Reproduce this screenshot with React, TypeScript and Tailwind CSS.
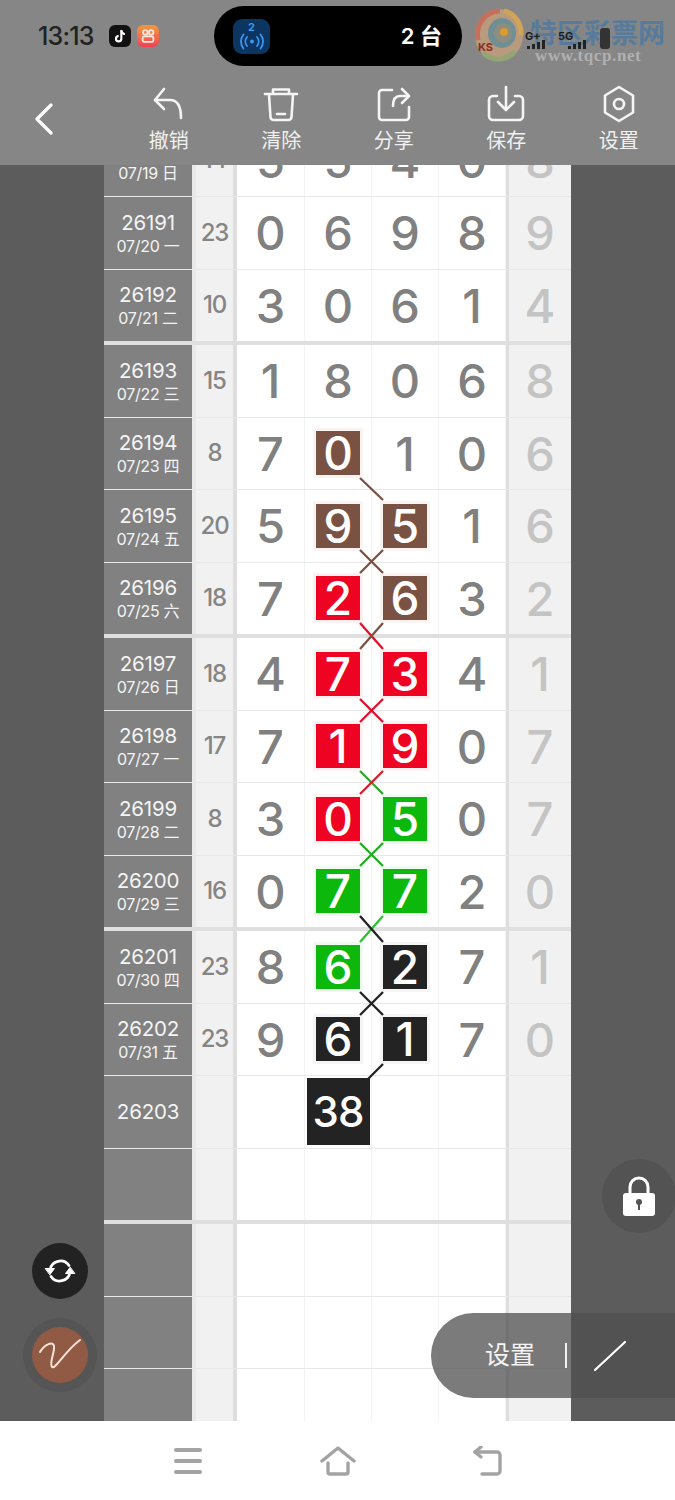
import React from "react";

type Tone = "brown" | "red" | "green" | "black";

type RowData = {
  no?: string;
  date?: string;
  sum?: string;
  nums?: string[];
  last?: string;
  marks?: (Tone | null)[];
  thick?: boolean;
  total?: string;
};

const TONES: Record<Tone, string> = {
  brown: "bg-[#7a5244] ring-[#f9f4f2]",
  red: "bg-[#ee0422] ring-[#fdf0f2]",
  green: "bg-[#0cb80c] ring-[#f1faf1]",
  black: "bg-[#232323] ring-[#f5f5f5]",
};

const ROWS: RowData[] = [
  { no: "26190", date: "07/19 日", sum: "14", nums: ["5", "5", "4", "0"], last: "8" },
  { no: "26191", date: "07/20 一", sum: "23", nums: ["0", "6", "9", "8"], last: "9" },
  { no: "26192", date: "07/21 二", sum: "10", nums: ["3", "0", "6", "1"], last: "4", thick: true },
  { no: "26193", date: "07/22 三", sum: "15", nums: ["1", "8", "0", "6"], last: "8" },
  { no: "26194", date: "07/23 四", sum: "8", nums: ["7", "0", "1", "0"], last: "6", marks: [null, "brown", null, null] },
  { no: "26195", date: "07/24 五", sum: "20", nums: ["5", "9", "5", "1"], last: "6", marks: [null, "brown", "brown", null] },
  { no: "26196", date: "07/25 六", sum: "18", nums: ["7", "2", "6", "3"], last: "2", marks: [null, "red", "brown", null], thick: true },
  { no: "26197", date: "07/26 日", sum: "18", nums: ["4", "7", "3", "4"], last: "1", marks: [null, "red", "red", null] },
  { no: "26198", date: "07/27 一", sum: "17", nums: ["7", "1", "9", "0"], last: "7", marks: [null, "red", "red", null] },
  { no: "26199", date: "07/28 二", sum: "8", nums: ["3", "0", "5", "0"], last: "7", marks: [null, "red", "green", null] },
  { no: "26200", date: "07/29 三", sum: "16", nums: ["0", "7", "7", "2"], last: "0", marks: [null, "green", "green", null], thick: true },
  { no: "26201", date: "07/30 四", sum: "23", nums: ["8", "6", "2", "7"], last: "1", marks: [null, "green", "black", null] },
  { no: "26202", date: "07/31 五", sum: "23", nums: ["9", "6", "1", "7"], last: "0", marks: [null, "black", "black", null] },
  { no: "26203", total: "38" },
  { thick: true },
  {},
  {},
  {},
];

// connector lines in page coordinates: x1 y1 x2 y2 colour
const LINES: [number, number, number, number, string][] = [
  [360, 478, 383, 500, "#7a5244"],
  [360, 550, 383, 573, "#7a5244"],
  [383, 550, 360, 573, "#7a5244"],
  [360, 623, 383, 649, "#e0102a"],
  [383, 623, 360, 649, "#7a5244"],
  [360, 699, 383, 722, "#e0102a"],
  [383, 699, 360, 722, "#e0102a"],
  [360, 771, 383, 794, "#2fa52f"],
  [383, 771, 360, 794, "#d81c2c"],
  [360, 843, 383, 866, "#1fae1f"],
  [383, 843, 360, 866, "#1fae1f"],
  [383, 916, 360, 942, "#2fc02f"],
  [360, 916, 383, 942, "#222222"],
  [360, 992, 383, 1015, "#222222"],
  [383, 992, 360, 1015, "#222222"],
  [383, 1064, 367, 1080, "#222222"],
];

function Row({ row }: { row: RowData }) {
  const h = row.thick ? "h-[75.5px] border-b-4 border-[#dfdfdf]" : "h-[72.5px] border-b border-[#e8e8e8]";
  return (
    <div className={`grid shrink-0 grid-cols-[88px_4px_37px_4px_68px_67px_67px_67px_3px_62px] ${h}`}>
      <div className="flex flex-col items-center justify-center bg-[#818181] text-[#f4f4f4]">
        {row.no && <span className="text-[20.500px] leading-[26px] tracking-[-0.2px]">{row.no}</span>}
        {row.date && <span className="text-[16px] leading-[20px] tracking-[-0.3px]">{row.date}</span>}
      </div>
      <div className="bg-[#e9e9e9]" />
      <div className="flex items-center justify-center bg-[#f1f1f1] text-[24px] font-medium tracking-[-1.2px] text-[#858585]">
        {row.sum}
      </div>
      <div className="bg-[#dedede]" />
      {[0, 1, 2, 3].map((i) => {
        const tone = row.marks?.[i];
        return (
          <div key={i} className="flex items-center justify-center border-r border-[#f3f3f3] bg-white text-[47px] font-medium leading-none text-[#808080]">
            {row.total && i === 1 ? (
              <span className="flex h-[67px] w-[63px] items-center justify-center bg-[#232323] text-[42px] font-medium tracking-[-1px] text-white">
                {row.total}
              </span>
            ) : tone ? (
              <span className={`flex h-[44px] w-[44px] items-center justify-center text-[46px] font-medium text-white ring-[3px] ${TONES[tone]}`}>
                {row.nums?.[i]}
              </span>
            ) : (
              row.nums?.[i]
            )}
          </div>
        );
      })}
      <div className="bg-[#dedede]" />
      <div className="flex items-center justify-center bg-[#f1f1f1] text-[47px] font-medium leading-none text-[#c4c4c4]">
        {row.last}
      </div>
    </div>
  );
}

function ToolItem({ label, children }: { label: string; children: React.ReactNode }) {
  return (
    <div className="flex w-[112.5px] flex-col items-center pt-[12px]">
      <svg viewBox="0 0 40 40" className="h-10 w-10" fill="none" stroke="#f5f5f5" strokeWidth="2.6" strokeLinecap="round" strokeLinejoin="round">
        {children}
      </svg>
      <span className="mt-[3px] text-[20px] leading-[28px] text-[#f0f0f0]">{label}</span>
    </div>
  );
}

function Watermark() {
  return (
    <div className="absolute left-[474px] top-[8px] h-[56px] w-[200px]">
      <svg viewBox="0 0 50 54" className="absolute left-0 top-0 h-[54px] w-[50px]">
        <ellipse cx="25" cy="27" rx="24" ry="26" fill="#b99a7c" />
        <path d="M4 32C1 16 12 3 26 3" fill="none" stroke="#c4705c" strokeWidth="5" />
        <path d="M30 3c10 2 18 12 17 24" fill="none" stroke="#d0a55a" strokeWidth="5" />
        <path d="M9 45c10 9 24 8 32-2" fill="none" stroke="#93a573" strokeWidth="5" />
        <ellipse cx="28" cy="25" rx="14" ry="15" fill="#6e8f94" />
        <ellipse cx="29" cy="25" rx="9" ry="10" fill="#8d8d80" />
        <circle cx="30" cy="24" r="4" fill="#d99a2e" />
      </svg>
      <span className="absolute left-[56px] top-[8px] font-['Noto_Sans_CJK_SC',sans-serif] text-[27px] font-bold leading-[32px] text-[#587a9b]">特区彩票网</span>
      <span className="absolute left-[61px] top-[39px] font-['Liberation_Serif',serif] text-[17px] font-bold leading-[18px] tracking-[0.6px] text-[#b0b0b0]">www.tqcp.net</span>
      <span className="absolute left-[4px] top-[34px] text-[11px] font-bold leading-none text-[#8e2b22]">KS</span>
      <span className="absolute left-[51px] top-[23px] text-[11px] font-bold leading-none text-[#202020]">G+</span>
      <span className="absolute left-[84px] top-[23px] text-[11px] font-bold leading-none text-[#202020]">5G</span>
      <div className="absolute left-[53px] top-[32px] flex items-end gap-[2px]">
        <i className="h-[3px] w-[3px] bg-[#222]" />
        <i className="h-[5px] w-[3px] bg-[#222]" />
        <i className="h-[7px] w-[3px] bg-[#222]" />
        <i className="h-[9px] w-[3px] bg-[#222]" />
      </div>
      <div className="absolute left-[94px] top-[32px] flex items-end gap-[2px]">
        <i className="h-[3px] w-[3px] bg-[#222]" />
        <i className="h-[5px] w-[3px] bg-[#222]" />
        <i className="h-[7px] w-[3px] bg-[#222]" />
        <i className="h-[9px] w-[3px] bg-[#222]" />
      </div>
      <div className="absolute left-[126px] top-[20px] h-[21px] w-[10px] rounded-[3px] bg-[#333]" />
    </div>
  );
}

export default function App() {
  return (
    <div className="relative flex h-[1500px] w-[675px] flex-col overflow-hidden bg-white font-['Inter','Noto_Sans_CJK_SC',sans-serif]">
      {/* Status bar + toolbar */}
      <header className="relative z-10 h-[165px] shrink-0 bg-[#868686]">
        <div className="flex h-[72px] items-center pl-[38px]">
          <span className="w-[71px] text-[25px] font-medium leading-none tracking-[-0.8px] text-[#222]">13:13</span>
          <div className="flex h-[22px] w-[22px] items-center justify-center rounded-[6px] bg-[#111]">
            <svg viewBox="0 0 24 24" className="h-4 w-4" fill="none" stroke="#fff" strokeWidth="3.2">
              <path d="M14 3v13a4 4 0 1 1-4-4" />
              <path d="M14 4c.5 3 2.500 5 5.500 5.300" />
            </svg>
          </div>
          <div className="ml-[6px] flex h-[22px] w-[22px] items-center justify-center rounded-[6px] bg-gradient-to-b from-[#ef9a3a] to-[#ef3d55]">
            <svg viewBox="0 0 20 20" className="h-[18px] w-[18px]" fill="none" stroke="#fde8e0" strokeWidth="2">
              <circle cx="7" cy="6" r="2.500" />
              <circle cx="13.500" cy="6" r="2.500" />
              <rect x="4" y="10.500" width="12" height="6" rx="2" />
            </svg>
          </div>
          <div className="ml-[55px] flex h-[60px] w-[248px] items-center justify-between rounded-full bg-black pl-[19px] pr-[20px]">
            <div className="flex h-[35px] w-[37px] flex-col items-center justify-center rounded-[9px] bg-[#0d3561]">
              <span className="text-[11px] font-bold leading-[11px] text-[#3c97ee]">2</span>
              <svg viewBox="0 0 28 16" className="h-[17px] w-[28px]" fill="none" stroke="#3c97ee" strokeWidth="1.800" strokeLinecap="round">
                <circle cx="14" cy="8" r="2" fill="#3c97ee" stroke="none" />
                <path d="M9 3.500a7 7 0 0 0 0 9M19 3.500a7 7 0 0 1 0 9M5.500 1a11 11 0 0 0 0 14M22.500 1a11 11 0 0 1 0 14" />
              </svg>
            </div>
            <span className="text-[22px] font-semibold leading-none text-white">2 台</span>
          </div>
        </div>
        <Watermark />
        <div className="flex h-[93px] items-start">
          <div className="flex w-[112.5px] pl-[34px] pt-[31px]">
            <svg viewBox="0 0 20 32" className="h-[32px] w-[20px]" fill="none" stroke="#fff" strokeWidth="3.200" strokeLinecap="round" strokeLinejoin="round">
              <path d="M17 2 3 16l14 14" />
            </svg>
          </div>
          <ToolItem label="撤销">
            <path d="M15 5 6 16l9 9" />
            <path d="M6 16h15c7 0 11 6 11 18" />
          </ToolItem>
          <ToolItem label="清除">
            <path d="M4 10h32" />
            <path d="M12 9V5.500h16V9" />
            <path d="M8 11l1.500 22a3 3 0 0 0 3 3h15a3 3 0 0 0 3-3L32 11" />
            <path d="M16 30h8" />
          </ToolItem>
          <ToolItem label="分享">
            <path d="M18 6H8a3 3 0 0 0-3 3v24a3 3 0 0 0 3 3h24a3 3 0 0 0 3-3V23" />
            <path d="M28 5l7 7-7 7" />
            <path d="M34 12h-8c-5 0-7 4-7 10" />
          </ToolItem>
          <ToolItem label="保存">
            <path d="M11 12H7a4 4 0 0 0-4 4v16a4 4 0 0 0 4 4h26a4 4 0 0 0 4-4V16a4 4 0 0 0-4-4h-4" />
            <path d="M20 3v22" />
            <path d="M12 18l8 8 8-8" />
          </ToolItem>
          <ToolItem label="设置">
            <path d="M20 3 34 11.500v17L20 37 6 28.500v-17Z" />
            <circle cx="20" cy="20" r="5" />
          </ToolItem>
        </div>
      </header>

      {/* Chart */}
      <main className="relative h-[1256px] shrink-0 overflow-hidden bg-[#5c5c5c]">
        <div className="ml-[104px] mt-[-40.500px] flex w-[467px] flex-col">
          {ROWS.map((row, i) => (
            <Row key={i} row={row} />
          ))}
        </div>

        <svg viewBox="0 165 675 1256" className="absolute inset-0 h-[1256px] w-[675px]" fill="none" strokeWidth="2.300">
          {LINES.map(([x1, y1, x2, y2, c], i) => (
            <line key={i} x1={x1} y1={y1} x2={x2} y2={y2} stroke={c} />
          ))}
        </svg>

        {/* Floating controls */}
        <div className="absolute left-[602px] top-[994px] flex h-[74px] w-[74px] items-center justify-center rounded-full bg-[#535353]">
          <svg viewBox="0 0 34 40" className="h-[40px] w-[34px]">
            <path d="M8 18V11a9 9 0 0 1 18 0v7" fill="none" stroke="#fff" strokeWidth="3" />
            <rect x="1" y="17" width="32" height="23" rx="3" fill="#fff" />
            <circle cx="17" cy="26" r="3" fill="#535353" />
            <rect x="16" y="27" width="2" height="7" fill="#535353" />
          </svg>
        </div>
        <div className="absolute left-[32px] top-[1078px] flex h-[56px] w-[56px] items-center justify-center rounded-full bg-[#222]">
          <svg viewBox="0 0 32 32" className="h-8 w-8" fill="none" stroke="#fff" strokeWidth="2.800" strokeLinecap="round">
            <path d="M6 15A10.500 10.500 0 0 1 25 10.500" />
            <path d="M26 17A10.500 10.500 0 0 1 7 21.500" />
            <path d="M1.500 13.500h9L6 19.500Z" fill="#fff" strokeWidth="1" strokeLinejoin="round" />
            <path d="M30.500 18.500h-9L26 12.500Z" fill="#fff" strokeWidth="1" strokeLinejoin="round" />
          </svg>
        </div>
        <div className="absolute left-[23px] top-[1153px] flex h-[74px] w-[74px] items-center justify-center rounded-full bg-[#555]">
          <div className="flex h-[56px] w-[56px] items-center justify-center rounded-full bg-[#915a45]">
            <svg viewBox="0 0 44 36" className="h-[36px] w-[44px]" fill="none" stroke="#fbe3d6" strokeWidth="2" strokeLinecap="round" strokeLinejoin="round">
              <path d="M2 15C7 7 15 4 16 9c1 6-5 17-2 21 3 3 13-16 28-27" />
            </svg>
          </div>
        </div>
        <div className="absolute left-[431px] right-0 top-[1148px] flex h-[85px] items-center rounded-l-[43px] bg-[#4f4f4f]/75 pl-[54px]">
          <span className="w-[80px] text-[25px] leading-none text-[#f4f4f4]">设置</span>
          <div className="h-[25px] w-[2px] bg-[#f0f0f0]" />
          <svg viewBox="0 0 34 32" className="ml-[26px] h-[32px] w-[34px]" fill="none" stroke="#fff" strokeWidth="2.200" strokeLinecap="round">
            <path d="M2 30 32 2" />
          </svg>
        </div>
      </main>

      {/* Navigation bar */}
      <nav className="flex h-[79px] shrink-0 items-center justify-center gap-[117px] bg-white">
        <svg viewBox="0 0 30 30" className="h-[30px] w-[30px]" fill="none" stroke="#a3a3a3" strokeWidth="4" strokeLinecap="round">
          <path d="M3 4h24M3 15h24M3 26h24" />
        </svg>
        <svg viewBox="0 0 36 30" className="h-[30px] w-[36px]" fill="none" stroke="#a3a3a3" strokeWidth="3.400" strokeLinecap="round" strokeLinejoin="round">
          <path d="M2 15 18 2l16 13" />
          <path d="M8 17v9a2 2 0 0 0 2 2h16a2 2 0 0 0 2-2v-9" />
        </svg>
        <svg viewBox="0 0 30 30" className="h-[30px] w-[30px]" fill="none" stroke="#a3a3a3" strokeWidth="3.400" strokeLinecap="round" strokeLinejoin="round">
          <path d="M2 6h22a3 3 0 0 1 3 3v16a3 3 0 0 1-3 3H9" />
          <path d="M8 1 2 6l6 5" />
        </svg>
      </nav>
    </div>
  );
}
